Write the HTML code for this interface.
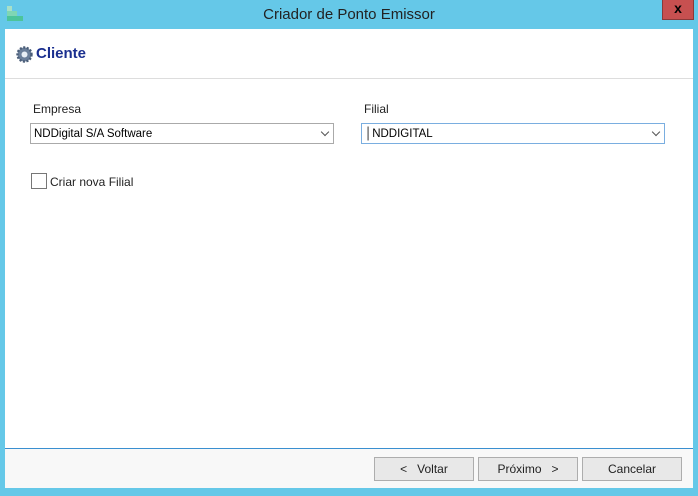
<!DOCTYPE html>
<html><head><style>
*{margin:0;padding:0;box-sizing:border-box}
body{width:698px;height:496px;background:#65c8e8;position:relative;overflow:hidden;font-family:"Liberation Sans",sans-serif;font-size:12px;color:#000}
.abs{position:absolute}
.title{left:0;width:698px;top:6px;text-align:center;font-size:15px;color:#222}
.close{left:662px;top:0;width:32px;height:20px;background:#c75050;border:1px solid #8a3a3a;border-top:0;color:#000;font-weight:bold;text-align:center;font-size:14px;line-height:16px}
.client{left:5px;top:29px;width:688px;height:459px;background:#fff}
.hdr{left:5px;top:78px;width:688px;height:1px;background:#ddd}
.foot{left:5px;top:448px;width:688px;height:40px;background:#f8f8f8;border-top:1px solid #3a8fd0}
.lbl{font-size:12px;color:#222}
.combo{height:21px;border:1px solid #aaa;background:#fff;font-size:11.5px;line-height:20px;padding-left:3px}
.arr{position:absolute;right:5px;width:6px;height:6px;border-right:1.5px solid #555;border-bottom:1.5px solid #555;transform:rotate(45deg);top:5px}
.btn{top:457px;width:100px;height:24px;border:1px solid #adadad;background:#e8e8e8;text-align:center;line-height:22px;font-size:12px;color:#222}
</style></head><body>
<div class="abs" style="left:7px;top:6px;width:5px;height:5px;background:#a8e0c8"></div>
<div class="abs" style="left:7px;top:11px;width:10px;height:5px;background:#7fd6b4"></div>
<div class="abs" style="left:7px;top:16px;width:16px;height:5px;background:#4cc49a"></div>
<div class="abs title">Criador de Ponto Emissor</div>
<div class="abs close">x</div>
<div class="abs client"></div>
<svg class="abs" style="left:16px;top:46px" width="17" height="17" viewBox="0 0 17 17"><circle cx="8.5" cy="8.5" r="7" fill="#6b7f9a" stroke="#4a5d78" stroke-dasharray="2 1.5" stroke-width="2.4"/><circle cx="8.5" cy="8.5" r="3" fill="#e8eef5"/></svg>
<div class="abs" style="left:36px;top:45px;font-size:15px;font-weight:bold;color:#1a2f8f">Cliente</div>
<div class="abs hdr"></div>
<div class="abs lbl" style="left:33px;top:102px">Empresa</div>
<div class="abs lbl" style="left:364px;top:102px">Filial</div>
<div class="abs combo" style="left:30px;top:123px;width:304px">NDDigital S/A Software<span class="arr"></span></div>
<div class="abs combo" style="left:361px;top:123px;width:304px;border-color:#7aaee0">│NDDIGITAL<span class="arr"></span></div>
<div class="abs" style="left:31px;top:173px;width:16px;height:16px;border:1px solid #777;background:#fff"></div>
<div class="abs lbl" style="left:50px;top:175px">Criar nova Filial</div>
<div class="abs foot"></div>
<div class="abs btn" style="left:374px">&lt;&nbsp;&nbsp; Voltar</div>
<div class="abs btn" style="left:478px">Próximo &nbsp;&nbsp;&gt;</div>
<div class="abs btn" style="left:582px">Cancelar</div>
</body></html>
